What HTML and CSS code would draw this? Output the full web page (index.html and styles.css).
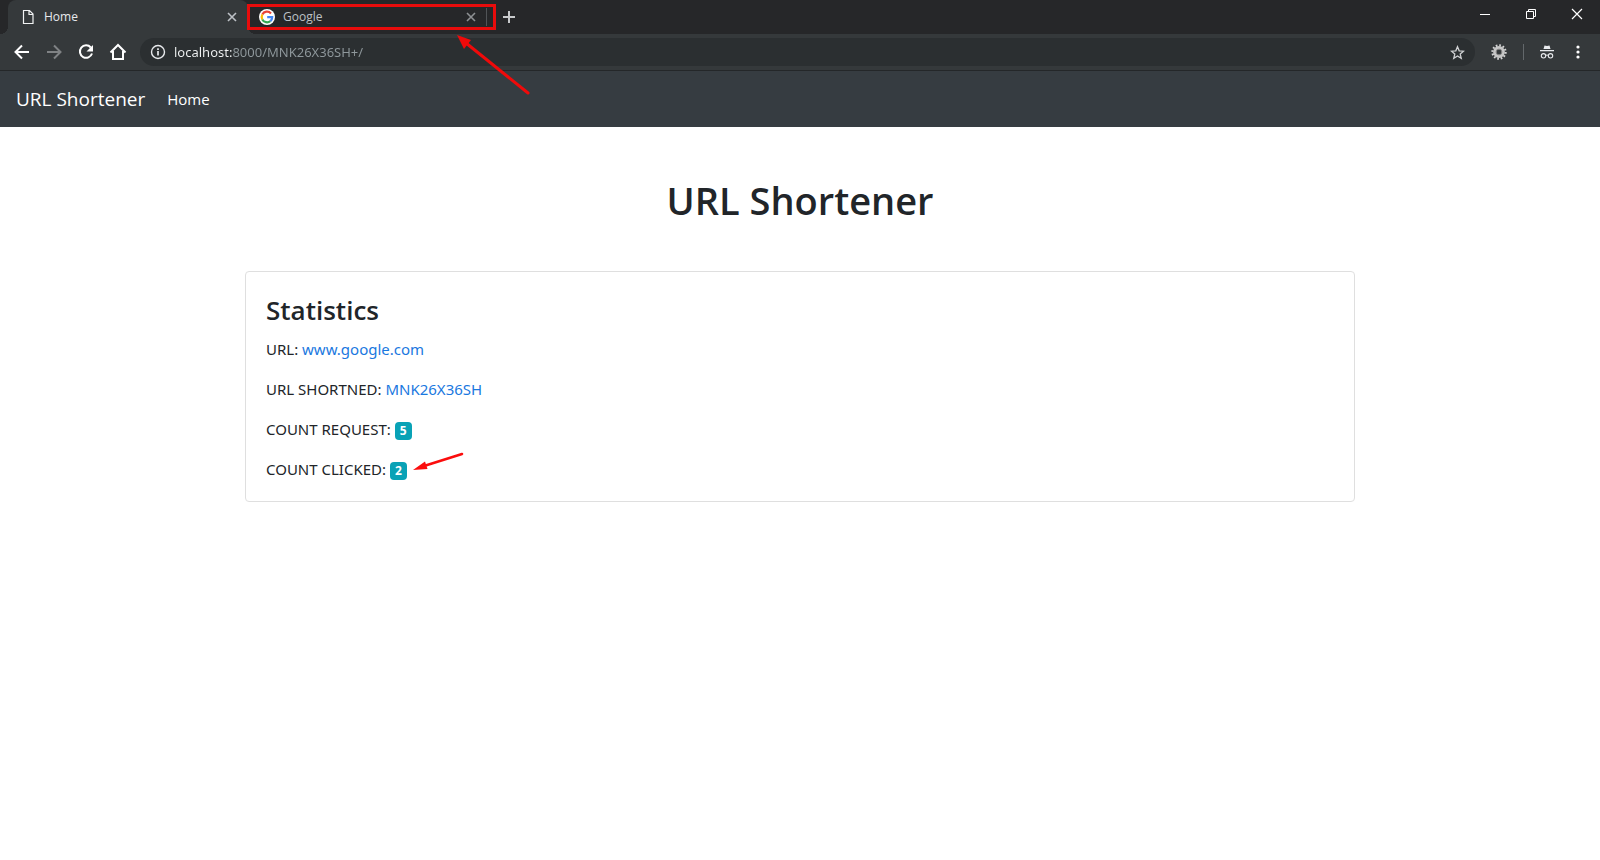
FILE: index.html
```html
<!DOCTYPE html>
<html lang="en">
<head>
<meta charset="utf-8">
<meta name="viewport" content="width=device-width, initial-scale=1">
<title>Home</title>
<link rel="stylesheet" href="styles.css">
</head>
<body>
<header class="browser">
  <div class="tabstrip">
    <div class="tab tab-active">
      <svg class="favicon" viewBox="0 0 16 16"><path d="M3.500 1.500h6l3.500 3.500v9.500h-9.500zM9 1.500v4h4" fill="none" stroke="#f1f3f4" stroke-width="1.200"/></svg>
      <a class="tab-title" href="#">Home</a>
      <button class="tab-close" type="button" aria-label="Close Home"><svg width="10" height="10" viewBox="0 0 10 10"><path d="M1 1l8 8M9 1l-8 8" stroke="currentColor" stroke-width="1.600"/></svg></button>
    </div>
    <div class="tab tab-marked">
      <svg class="favicon" viewBox="0 0 16 16"><circle cx="8" cy="8" r="8" fill="#fff"/><g fill="none" stroke-width="2.200"><path d="M12 4.400A5.300 5.300 0 0 0 3.300 5.600" stroke="#ea4335"/><path d="M3.300 5.600a5.300 5.300 0 0 0 0 4.800" stroke="#fbbc05"/><path d="M3.300 10.400a5.300 5.300 0 0 0 8.100 1.700" stroke="#34a853"/><path d="M11.400 12.100A5.300 5.300 0 0 0 13.200 8.200H8.200" stroke="#4285f4"/></g></svg>
      <a class="tab-title" href="#">Google</a>
      <button class="tab-close" type="button" aria-label="Close Google"><svg width="10" height="10" viewBox="0 0 10 10"><path d="M1 1l8 8M9 1l-8 8" stroke="currentColor" stroke-width="1.600"/></svg></button>
    </div>
    <button class="new-tab" type="button" aria-label="New tab"><svg width="14" height="14" viewBox="0 0 14 14"><path d="M7 1v12M1 7h12" stroke="#c8cacc" stroke-width="2"/></svg></button>
    <div class="window-controls">
      <button type="button" aria-label="Minimize"><svg width="12" height="12" viewBox="0 0 12 12"><path d="M1 6.500h10" stroke="#fff"/></svg></button>
      <button type="button" aria-label="Restore"><svg width="12" height="12" viewBox="0 0 12 12"><path d="M1.500 3.500h7v7h-7zM3.500 3.500v-2h7v7h-2" fill="none" stroke="#fff"/></svg></button>
      <button type="button" aria-label="Close window"><svg width="12" height="12" viewBox="0 0 12 12"><path d="M1 1l10 10M11 1l-10 10" stroke="#fff" stroke-width="1.200"/></svg></button>
    </div>
  </div>
  <div class="toolbar">
    <div class="nav-buttons">
      <button type="button" aria-label="Back"><svg width="16" height="16" viewBox="0 0 16 16"><path d="M15 8H2M8 1.500L1.500 8L8 14.500" fill="none" stroke="#fff" stroke-width="2"/></svg></button>
      <button type="button" aria-label="Forward" disabled><svg width="16" height="16" viewBox="0 0 16 16"><path d="M1 8h13M8 1.500L14.500 8L8 14.500" fill="none" stroke="#7f8284" stroke-width="2"/></svg></button>
      <button type="button" aria-label="Reload"><svg width="16" height="16" viewBox="0 0 16 16"><path d="M12.800 3.500A6.200 6.200 0 1 0 14 9.500" fill="none" stroke="#fff" stroke-width="2"/><path d="M15 1v6.500H8.500z" fill="#fff"/></svg></button>
      <button type="button" aria-label="Home page"><svg width="18" height="18" viewBox="0 0 18 18"><path d="M1.500 9.500L9 2l7.500 7.500M4 8v8h10V8" fill="none" stroke="#fff" stroke-width="2"/></svg></button>
    </div>
    <div class="omnibox">
      <svg width="16" height="16" viewBox="0 0 16 16"><circle cx="8" cy="8" r="6.500" fill="none" stroke="#e8eaed" stroke-width="1.400"/><path d="M8 7v4.500M8 4.300v1.700" stroke="#e8eaed" stroke-width="1.700"/></svg>
      <input class="address" type="text" aria-label="Address" value="localhost:8000/MNK26X36SH+/" spellcheck="false">
      <button type="button" aria-label="Bookmark this page"><svg width="15" height="15" viewBox="0 0 16 16"><path d="M8 1.800l1.800 4.400 4.700.4-3.600 3.100 1.100 4.600L8 11.800l-4 2.500 1.100-4.600L1.500 6.600l4.700-.4z" fill="none" stroke="#d0d2d4" stroke-width="1.400"/></svg></button>
    </div>
    <div class="extensions">
      <button type="button" aria-label="Extension"><svg width="16" height="16" viewBox="0 0 16 16"><circle cx="8" cy="8" r="6.600" fill="none" stroke="#d4d4d4" stroke-width="2.200" stroke-dasharray="1.700 1.756"/><circle cx="8" cy="8" r="4.300" fill="none" stroke="#c6c6c6" stroke-width="3.200"/><circle cx="8" cy="8" r="2.900" fill="none" stroke="#858585"/></svg></button>
      <span class="divider"></span>
      <button type="button" aria-label="Incognito"><svg width="14" height="14" viewBox="0 0 14 14"><path d="M3.500 4L4.500.5l2.500.6 2.500-.6 1 3.500zM0 5h14v1.200H0z" fill="#e8eaed"/><g fill="none" stroke="#e8eaed" stroke-width="1.100"><circle cx="3.500" cy="10.800" r="2.200"/><circle cx="10.500" cy="10.800" r="2.200"/><path d="M5.700 10.400q1.300-.8 2.600 0"/></g></svg></button>
      <button type="button" aria-label="Menu"><svg width="4" height="14" viewBox="0 0 4 14"><g fill="#fff"><circle cx="2" cy="2" r="1.600"/><circle cx="2" cy="7" r="1.600"/><circle cx="2" cy="12" r="1.600"/></g></svg></button>
    </div>
  </div>
</header>

<nav class="navbar">
  <a class="brand" href="#">URL Shortener</a>
  <a class="nav-link" href="#">Home</a>
</nav>

<main class="container">
  <h1 class="page-title">URL Shortener</h1>
  <section class="card">
    <h2 class="card-title">Statistics</h2>
    <p>URL: <a href="#">www.google.com</a></p>
    <p>URL SHORTNED: <a href="#">MNK26X36SH</a></p>
    <p>COUNT REQUEST: <span class="badge">5</span></p>
    <p>COUNT CLICKED: <span class="badge">2<svg class="count-arrow" width="54" height="22" viewBox="0 0 54 22"><path d="M50 3L12 15" stroke="#fb0d0d" stroke-width="2.600" stroke-linecap="round"/><path d="M1 19l12-8.500 2.500 7.500z" fill="#fb0d0d"/></svg></span></p>
  </section>
</main>

<svg class="tab-arrow" width="76" height="64" viewBox="0 0 76 64"><path d="M72 59L10 9" stroke="#f00a0a" stroke-width="3" stroke-linecap="round"/><path d="M1 1l14 5-7 9z" fill="#f00a0a"/></svg>
</body>
</html>
```
FILE: styles.css
```css
* {
  box-sizing: border-box;
}

body {
  margin: 0;
  background: #fff;
  color: #212529;
  font-family: "Open Sans", "Noto Sans", sans-serif;
  font-size: 15px;
  line-height: 24px;
}

button {
  display: flex;
  align-items: center;
  justify-content: center;
  padding: 0;
  border: 0;
  background: none;
}

a {
  color: #1a78e0;
  text-decoration: none;
}

svg {
  flex: none;
}

/* Browser frame */
.browser {
  background: #35393b;
  border-bottom: 1px solid #242729;
  font-size: 12px;
}

.tabstrip {
  display: flex;
  height: 34px;
  padding-left: 8px;
  background: #262729;
}

.tab {
  position: relative;
  display: flex;
  align-items: center;
  gap: 8px;
  width: 240px;
  padding: 0 10px 0 12px;
}

.tab-active {
  border-radius: 8px 8px 0 0;
  background: #35393b;
}

.tab-active::before,
.tab-active::after {
  content: "";
  position: absolute;
  bottom: 0;
  width: 8px;
  height: 8px;
}

.tab-active::before {
  right: 100%;
  background: radial-gradient(circle at 0 0, #262729 8px, #35393b 8px);
}

.tab-active::after {
  left: 100%;
  background: radial-gradient(circle at 100% 0, #262729 8px, #35393b 8px);
}

.favicon {
  width: 16px;
  height: 16px;
}

.tab-title {
  flex: 1;
  color: #e8eaed;
}

.tab-marked .tab-title {
  color: #bdc1c6;
}

.tab-close {
  width: 12px;
  height: 16px;
  color: #bdc1c6;
}

.tab-marked {
  width: 248px;
  padding: 0 19px 0 11px;
}

.tab-marked .tab-close {
  color: #8d9093;
}

.tab-marked::after {
  content: "";
  position: absolute;
  top: 4px;
  right: 0;
  bottom: 4px;
  left: -1px;
  z-index: 1;
  border: 3px solid #e80c0c;
  background: linear-gradient(#515457, #515457) right 6px center / 1px 18px no-repeat;
  pointer-events: none;
}

.new-tab {
  width: 26px;
}

.window-controls {
  display: flex;
  margin-left: auto;
}

.window-controls button {
  width: 46px;
  height: 28px;
}

.toolbar {
  display: flex;
  align-items: center;
  height: 36px;
  padding: 0 14px 0 6px;
}

.nav-buttons {
  display: flex;
}

.nav-buttons button {
  width: 32px;
  height: 32px;
}

.omnibox {
  display: flex;
  flex: 1;
  align-items: center;
  gap: 8px;
  height: 28px;
  margin-left: 6px;
  padding: 0 10px;
  border-radius: 14px;
  background: #2b2f31;
}

.address {
  flex: 1;
  min-width: 0;
  padding: 0;
  border: 0;
  outline: 0;
  background: linear-gradient(90deg, #f1f3f4 58px, #8f989c 58px) text;
  color: transparent;
  font: 13px/20px "Noto Sans", sans-serif;
}

.extensions {
  display: flex;
  align-items: center;
  gap: 16px;
  margin-left: 16px;
}

.divider {
  width: 1px;
  height: 16px;
  background: #63686b;
}

.extensions button:last-child {
  width: 16px;
}

/* Page */
.navbar {
  display: flex;
  align-items: center;
  gap: 22px;
  min-height: 56px;
  padding: 8px 16px;
  background: #363c41;
}

.navbar a {
  color: #fff;
}

.brand {
  font-size: 19px;
}

.container {
  max-width: 1140px;
  margin: 0 auto;
  padding: 48px 15px;
}

.page-title {
  margin: 0 0 46px;
  font-size: 38px;
  font-weight: 600;
  line-height: 50px;
  text-align: center;
}

.card {
  padding: 20px;
  border: 1px solid #dfdfdf;
  border-radius: 4px;
}

.card-title {
  margin: 0 0 9px;
  font-size: 26px;
  font-weight: 600;
  line-height: 36px;
}

.card p {
  margin: 0 0 16px;
  font-family: "Noto Sans", sans-serif;
}

.card p:last-child {
  margin-bottom: 0;
}

.badge {
  position: relative;
  display: inline-block;
  padding: 3px 5px;
  border-radius: 4px;
  background: #09a2b6;
  color: #fff;
  font-size: 12px;
  font-weight: 700;
  line-height: 12px;
}

/* Pointers laid over the page */
.count-arrow {
  position: absolute;
  top: -11px;
  left: calc(100% + 5px);
}

.tab-arrow {
  position: absolute;
  top: 34px;
  left: 456px;
}
```
